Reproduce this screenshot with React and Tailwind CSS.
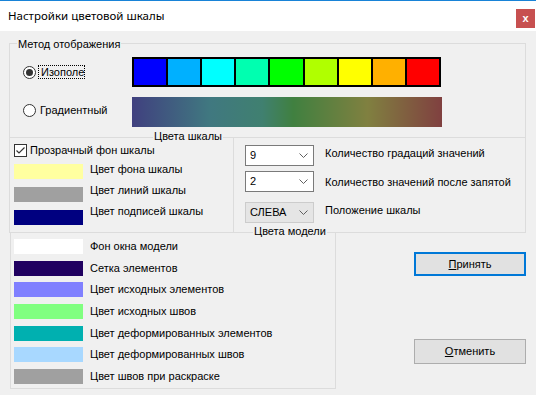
const strip = [
  "bg-[#0000ff]",
  "bg-[#00b0ff]",
  "bg-[#00ffff]",
  "bg-[#00ffb0]",
  "bg-[#00ff00]",
  "bg-[#b0ff00]",
  "bg-[#ffff00]",
  "bg-[#ffb000]",
  "bg-[#ff0000]",
];

const scaleColors = [
  { bg: "bg-[#ffffa0]", text: "Цвет фона шкалы" },
  { bg: "bg-[#a0a0a0]", text: "Цвет линий шкалы" },
  { bg: "bg-[#000080]", text: "Цвет подписей шкалы" },
];

const modelColors = [
  { bg: "bg-white", text: "Фон окна модели" },
  { bg: "bg-[#200060]", text: "Сетка элементов" },
  { bg: "bg-[#8080ff]", text: "Цвет исходных элементов" },
  { bg: "bg-[#80ff80]", text: "Цвет исходных швов" },
  { bg: "bg-[#00b0b0]", text: "Цвет деформированных элементов" },
  { bg: "bg-[#a8d8ff]", text: "Цвет деформированных швов" },
  { bg: "bg-[#a0a0a0]", text: "Цвет швов при раскраске" },
];

const Radio = ({ checked }) => (
  <span className="w-[13px] h-[13px] rounded-full border border-[#333] bg-white flex items-center justify-center shrink-0">
    {checked && <span className="w-[7px] h-[7px] rounded-full bg-[#333]" />}
  </span>
);

const Chevron = () => (
  <svg width="9" height="5" viewBox="0 0 9 5">
    <path d="M0.5 0.5 L4.5 4.5 L8.5 0.5" stroke="#606060" fill="none" />
  </svg>
);

const Combo = ({ value, disabled }) => (
  <div
    className={
      disabled
        ? "w-[69px] h-[21px] border border-[#cccccc] bg-[#e5e5e5] flex items-center justify-between pl-[4px] pr-[5px]"
        : "w-[69px] h-[21px] border border-[#7a7a7a] bg-white flex items-center justify-between pl-[4px] pr-[5px]"
    }
  >
    <span>{value}</span>
    <Chevron />
  </div>
);

const App = () => {
  return (
    <div className="w-[536px] h-[395px] bg-[#f0f0f0] text-[11px] leading-[13px] text-black font-['Liberation_Sans',sans-serif] whitespace-nowrap overflow-hidden">
      {/* заголовок окна */}
      <div className="h-[31px] bg-white border-t border-[#1883d7] flex items-start justify-between">
        <span className="pl-[8px] mt-[8px] text-[11.5px] leading-[14px] font-['Noto_Sans',sans-serif]">
          Настройки цветовой шкалы
        </span>
        <span className="mt-[8px] mr-[1px] w-[19px] h-[19px] bg-[#c75050] text-white font-bold text-[11px] flex items-center justify-center">
          x
        </span>
      </div>

      {/* Метод отображения */}
      <div className="relative ml-[9px] mt-[12px] w-[517px] h-[95px] border border-[#dcdcdc]">
        <span className="absolute left-[7px] top-[-6px] px-[1px] bg-[#f0f0f0]">Метод отображения</span>
        <div className="flex flex-col pt-[13px] gap-[10px]">
          <div className="flex items-center h-[30px]">
            <div className="w-[122px] flex items-center pl-[13px]">
              <Radio checked />
              <span className="ml-[2px] pl-[2px] h-[14px] leading-[12px] border border-dotted border-black">Изополе</span>
            </div>
            <div className="w-[309px] h-[30px] bg-black p-[2px] flex gap-[2px]">
              {strip.map((c, i) => (
                <div key={i} className={`flex-1 ${c}`} />
              ))}
            </div>
          </div>
          <div className="flex items-center h-[30px]">
            <div className="w-[122px] flex items-center pl-[13px] -mt-[3px]">
              <Radio />
              <span className="ml-[4px]">Градиентный</span>
            </div>
            <div className="w-[310px] h-[30px] bg-[linear-gradient(to_right,#40407f,#407880_25%,#408070_42%,#408040_52%,#808040_76%,#804040)]" />
          </div>
        </div>
      </div>

      {/* Цвета шкалы */}
      <div className="relative ml-[9px] w-[517px] h-[95px] flex">
        <span className="absolute left-[144px] top-[-8px] px-[1px] bg-[#f0f0f0]">Цвета шкалы</span>
        <div className="w-[224px] border-l border-[#dcdcdc] pl-[4px] pt-[6px]">
          <div className="flex items-center">
            <span className="w-[13px] h-[13px] border border-[#333] bg-white flex items-center justify-center">
              <svg width="11" height="11" viewBox="0 0 11 11">
                <path d="M1.5 5.5 L4 8 L9.5 2.5" stroke="#333" strokeWidth="1.2" fill="none" />
              </svg>
            </span>
            <span className="ml-[3px]">Прозрачный фон шкалы</span>
          </div>
          <div className="flex">
            <div className="flex flex-col gap-[8px] mt-[7px]">
              {scaleColors.map((s) => (
                <div key={s.text} className={`w-[69px] h-[15px] ${s.bg}`} />
              ))}
            </div>
            <div className="flex flex-col ml-[7px] mt-[2px]">
              {scaleColors.map((s) => (
                <span key={s.text} className="h-[21px] leading-[21px]">
                  {s.text}
                </span>
              ))}
            </div>
          </div>
        </div>
        <div className="flex-1 border-l border-r border-b border-[#dcdcdc] pl-[11px] pt-[7px] flex flex-col">
          <div className="flex items-center">
            <Combo value="9" />
            <span className="ml-[11px] mb-[5px]">Количество градаций значений</span>
          </div>
          <div className="flex items-center mt-[5px]">
            <Combo value="2" />
            <span className="ml-[11px] mt-[2px]">Количество значений после запятой</span>
          </div>
          <div className="flex items-center mt-[10px]">
            <Combo value="СЛЕВА" disabled />
            <span className="ml-[11px] mb-[5px]">Положение шкалы</span>
          </div>
        </div>
      </div>

      {/* Цвета модели и кнопки */}
      <div className="flex -mt-[1px] ml-[10px]">
        <div className="relative w-[326px] h-[157px] border border-[#dcdcdc] pl-[3px] pt-[6px]">
          <span className="absolute left-[242px] top-[-8px] px-[1px] bg-[#f0f0f0]">Цвета модели</span>
          <div className="flex flex-col gap-[6.7px]">
            {modelColors.map((m) => (
              <div key={m.text} className="flex items-center h-[15px]">
                <div className={`w-[69px] h-[15px] ${m.bg}`} />
                <span className="ml-[7px]">{m.text}</span>
              </div>
            ))}
          </div>
        </div>
        <div className="ml-[78px] mt-[20px] flex flex-col">
          <button className="w-[112px] h-[24px] border-2 border-[#0078d7] bg-[#e1e1e1] flex items-center justify-center">
            <span>
              <span className="underline">П</span>ринять
            </span>
          </button>
          <button className="mt-[63px] w-[112px] h-[25px] border border-[#adadad] bg-[#e1e1e1] flex items-center justify-center">
            <span>
              <span className="underline">О</span>тменить
            </span>
          </button>
        </div>
      </div>
    </div>
  );
};

export default App;
